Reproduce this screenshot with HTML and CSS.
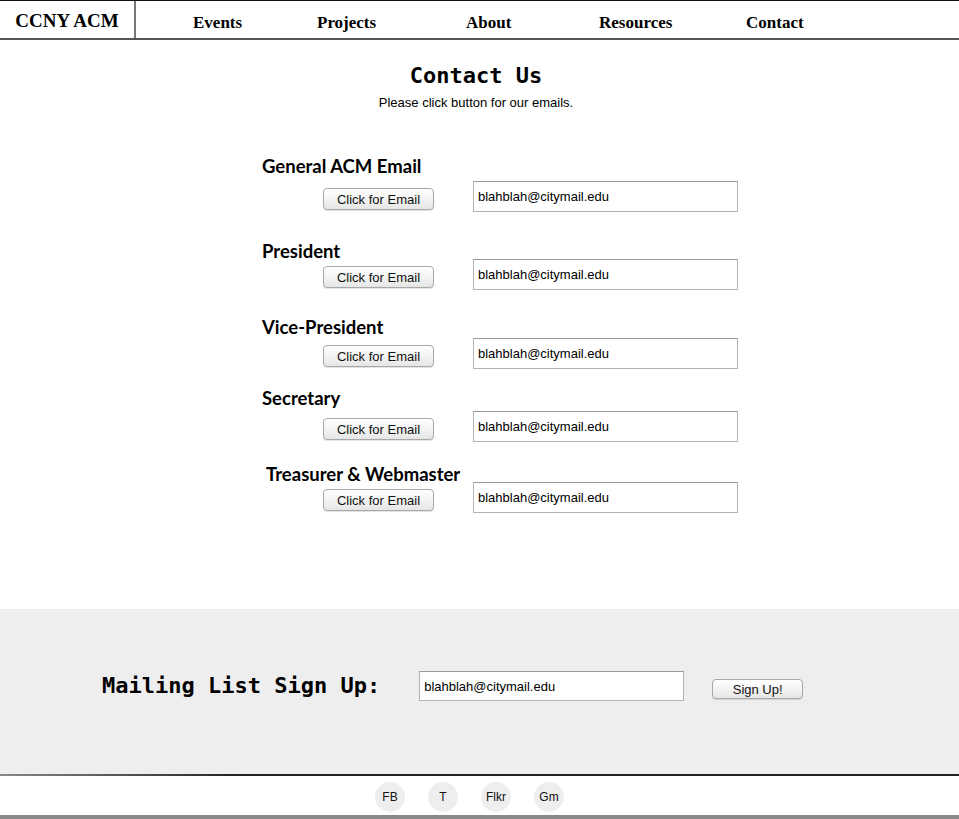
FILE: index.html
```html
<!DOCTYPE html>
<html lang="en">
<head>
<meta charset="utf-8">
<title>CCNY ACM - Contact</title>
<link rel="stylesheet" href="styles.css">
</head>
<body>
<header class="topbar">
  <div class="logo">CCNY ACM</div>
  <nav class="menu">
    <a class="menu-item" href="#">Events</a>
    <a class="menu-item" href="#">Projects</a>
    <a class="menu-item" href="#">About</a>
    <a class="menu-item" href="#">Resources</a>
    <a class="menu-item" href="#">Contact</a>
  </nav>
</header>

<main class="contact">
  <div class="intro">
    <h1 class="title">Contact Us</h1>
    <p class="subtitle">Please click button for our emails.</p>
  </div>

  <div class="entries">
    <section class="entry">
      <h2 class="entry-label">General ACM Email</h2>
      <div class="entry-row">
        <button class="btn btn-email" type="button">Click for Email</button>
        <input class="email-field" type="text" value="blahblah@citymail.edu">
      </div>
    </section>
    <section class="entry">
      <h2 class="entry-label">President</h2>
      <div class="entry-row">
        <button class="btn btn-email" type="button">Click for Email</button>
        <input class="email-field" type="text" value="blahblah@citymail.edu">
      </div>
    </section>
    <section class="entry">
      <h2 class="entry-label">Vice-President</h2>
      <div class="entry-row">
        <button class="btn btn-email" type="button">Click for Email</button>
        <input class="email-field" type="text" value="blahblah@citymail.edu">
      </div>
    </section>
    <section class="entry">
      <h2 class="entry-label">Secretary</h2>
      <div class="entry-row">
        <button class="btn btn-email" type="button">Click for Email</button>
        <input class="email-field" type="text" value="blahblah@citymail.edu">
      </div>
    </section>
    <section class="entry">
      <h2 class="entry-label">Treasurer &amp; Webmaster</h2>
      <div class="entry-row">
        <button class="btn btn-email" type="button">Click for Email</button>
        <input class="email-field" type="text" value="blahblah@citymail.edu">
      </div>
    </section>
  </div>
</main>

<section class="mailing">
  <h2 class="mailing-title">Mailing List Sign Up:</h2>
  <input class="email-field mailing-field" type="text" value="blahblah@citymail.edu">
  <button class="btn btn-signup" type="button">Sign Up!</button>
</section>

<footer class="footer">
  <a class="social" href="#">FB</a>
  <a class="social" href="#">T</a>
  <a class="social" href="#">Flkr</a>
  <a class="social" href="#">Gm</a>
</footer>
</body>
</html>
```

FILE: styles.css
```css
* { box-sizing: border-box; }

html, body {
  margin: 0;
  padding: 0;
  background: #fff;
  color: #000;
  font-family: "Liberation Sans", Arial, sans-serif;
}

/* ---------- top bar ---------- */
.topbar {
  display: flex;
  height: 40px;
  border-top: 1px solid #111;
  border-bottom: 2px solid #555;
}

.logo {
  width: 136px;
  border-right: 2px solid #777;
  text-align: center;
  padding-top: 9px;
  font-family: "Liberation Serif", "Times New Roman", serif;
  font-weight: bold;
  font-size: 19px;
  line-height: 22px;
}

.menu {
  display: grid;
  grid-template-columns: 124px 149px 133px 147px auto;
  padding-left: 57px;
  padding-top: 12px;
}

.menu-item {
  font-family: "Liberation Serif", "Times New Roman", serif;
  font-weight: bold;
  font-size: 17px;
  line-height: 20px;
  color: #000;
  text-decoration: none;
}

/* ---------- contact ---------- */
.contact {
  padding-bottom: 96px;
}

.intro {
  text-align: center;
  padding-right: 7px;
}

.title {
  margin: 23px 0 0;
  font-family: "DejaVu Sans Mono", monospace;
  font-weight: bold;
  font-size: 22px;
  line-height: 26px;
}

.subtitle {
  margin: 6px 0 0;
  font-size: 13px;
  line-height: 16px;
}

.entries {
  margin-left: 262px;
}

.entry-label {
  margin: 0;
  font-family: Lato, "Open Sans", sans-serif;
  font-weight: bold;
  font-size: 18.5px;
  line-height: 18px;
}

.entry-row {
  display: flex;
  align-items: flex-start;
}

.entry:nth-child(1) { margin-top: 46px; }
.entry:nth-child(1) .entry-row { margin-top: 6px; }
.entry:nth-child(2) { margin-top: 30px; }
.entry:nth-child(2) .entry-row { margin-top: -1px; }
.entry:nth-child(3) { margin-top: 28px; }
.entry:nth-child(3) .entry-row { margin-top: 2px; }
.entry:nth-child(4) { margin-top: 20px; }
.entry:nth-child(4) .entry-row { margin-top: 4px; }
.entry:nth-child(5) { margin-top: 23px; }
.entry:nth-child(5) .entry-row { margin-top: -1px; }
.entry:nth-child(5) .entry-label { padding-left: 4px; }

/* ---------- controls ---------- */
.btn {
  font-family: "Liberation Sans", Arial, sans-serif;
  font-size: 13px;
  color: #111;
  background: linear-gradient(#ffffff, #f3f3f3 50%, #e6e6e6);
  border: 1px solid #a8a8a8;
  border-radius: 4px;
  box-shadow: 0 1px 1px rgba(0, 0, 0, 0.12);
  padding: 0;
  cursor: pointer;
}

.btn-email {
  width: 111px;
  height: 22px;
  margin-top: 7px;
  margin-left: 61px;
}

.email-field {
  width: 265px;
  height: 31px;
  margin-left: 39px;
  padding: 0 4px;
  border: 1px solid #b4b4b4;
  border-top-color: #9a9a9a;
  font-family: "Liberation Sans", Arial, sans-serif;
  font-size: 13px;
  color: #000;
  background: #fff;
}

/* ---------- mailing list ---------- */
.mailing {
  display: flex;
  align-items: flex-start;
  height: 167px;
  padding: 62px 0 0 102px;
  background: #eeeeee;
  border-bottom: 2px solid #333;
  border-image: linear-gradient(to right, #888, #222 25%, #222) 1;
}

.mailing-title {
  margin: 2px 0 0;
  font-family: "DejaVu Sans Mono", monospace;
  font-weight: bold;
  font-size: 22px;
  line-height: 26px;
}

.mailing-field {
  margin-left: 39px;
  height: 30px;
}

.btn-signup {
  width: 91px;
  height: 20px;
  margin-left: 28px;
  margin-top: 8px;
}

/* ---------- footer ---------- */
.footer {
  display: flex;
  justify-content: center;
  gap: 23px;
  height: 43px;
  padding: 6px 20px 0 0;
  border-bottom: 4px solid #888;
}

.social {
  width: 30px;
  height: 30px;
  border-radius: 50%;
  background: #eeeeee;
  color: #111;
  font-size: 12px;
  line-height: 30px;
  text-align: center;
  text-decoration: none;
}
```
